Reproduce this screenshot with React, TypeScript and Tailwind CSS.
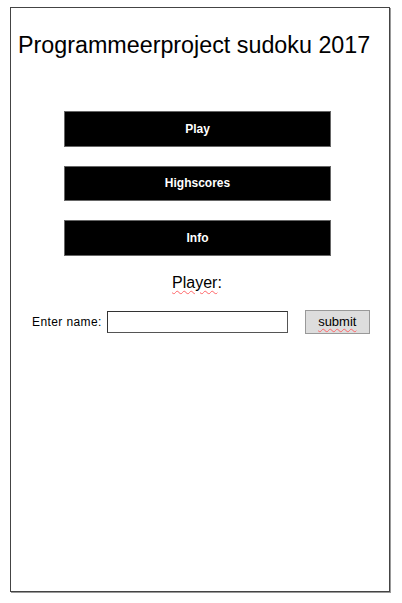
export default function App() {
  const menu = ['Play', 'Highscores', 'Info'];

  return (
    <div className="min-h-[603px] bg-white pt-[7px] pl-[10px] font-['Liberation_Sans',Arial,sans-serif] text-black">
      <div className="w-[380px] h-[585px] border border-[#444] shadow-[1px_1px_0_#999]">
        <h1 className="pt-[23px] pl-[7px] text-[23.3px] leading-[28px] whitespace-nowrap">
          Programmeerproject sudoku 2017
        </h1>

        <div className="mt-[52px] ml-[53px] w-[267px] flex flex-col gap-[19px]">
          {menu.map((label) => (
            <button
              key={label}
              className="h-[35.5px] bg-black border border-[#666] text-white text-[12px] font-bold"
            >
              {label}
            </button>
          ))}
        </div>

        <p className="mt-[18px] text-center text-[16px] leading-[18px] -translate-x-[3px]">
          <span className="underline decoration-wavy decoration-red-400 decoration-1 underline-offset-2">Player</span>:
        </p>

        <div className="mt-[18px] ml-[21px] flex items-center">
          <label className="text-[12px] tracking-[0.4px]">Enter name:</label>
          <input className="ml-[5px] w-[181px] h-[22px] border border-[#555] border-t-[#333] border-l-[#333] bg-white" />
          <button className="ml-[17px] w-[65px] h-[24px] bg-[#ddd] border border-[#999] text-[13px]">
            <span className="underline decoration-wavy decoration-red-400 decoration-1 underline-offset-2">submit</span>
          </button>
        </div>
      </div>
    </div>
  );
}
